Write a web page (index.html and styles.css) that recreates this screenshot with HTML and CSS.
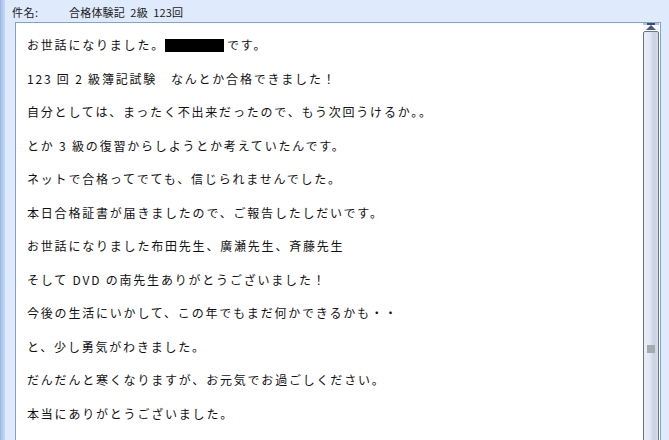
FILE: index.html
```
<!DOCTYPE html>
<html lang="ja">
<head>
    <meta charset="UTF-8">
    <title>件名: 合格体験記 2級 123回</title>
    <link rel="stylesheet" href="styles.css">
</head>
<body>
    <div class="window">
        <div class="edge"></div>
        <div class="pane">
            <div class="subject">
                <span class="label">件名:</span>
                <span class="title">合格体験記&nbsp;&nbsp;2級&nbsp;&nbsp;123回</span>
            </div>
            <div class="mailbox">
                <div class="body-text">
                    <p>お世話になりました。<span class="redact"></span>です。</p>
                    <p>123 回 2 級簿記試験　なんとか合格できました！</p>
                    <p>自分としては、まったく不出来だったので、もう次回うけるか。。</p>
                    <p>とか 3 級の復習からしようとか考えていたんです。</p>
                    <p>ネットで合格ってでても、信じられませんでした。</p>
                    <p>本日合格証書が届きましたので、ご報告したしだいです。</p>
                    <p>お世話になりました布田先生、廣瀬先生、斉藤先生</p>
                    <p>そして DVD の南先生ありがとうございました！</p>
                    <p>今後の生活にいかして、この年でもまだ何かできるかも・・</p>
                    <p>と、少し勇気がわきました。</p>
                    <p>だんだんと寒くなりますが、お元気でお過ごしください。</p>
                    <p>本当にありがとうございました。</p>
                </div>
                <div class="scrollbar">
                    <div class="splitter"><span></span></div>
                    <div class="arrow-up"><span></span></div>
                    <div class="thumb"><span class="grip"></span></div>
                </div>
            </div>
        </div>
    </div>
</body>
</html>
```

FILE: styles.css
```
html, body {
    margin: 0;
    height: 100%;
    overflow: hidden;
}
body {
    background: #dfeafc;
    font-family: "Noto Sans CJK JP", "Liberation Sans", sans-serif;
    color: #000;
}
.window {
    display: flex;
    height: 440px;
}
.edge {
    width: 5px;
    flex-shrink: 0;
    background: linear-gradient(to right, #8fadde 0, #a9c3ec 1px, #b6cdf1 3px, #c8daf6 5px);
}
.pane {
    flex: 1;
    display: flex;
    flex-direction: column;
    padding: 0 8px 0 10px;
}
.subject {
    height: 22px;
    display: flex;
    align-items: center;
    margin-left: -3px;
    font-size: 11px;
    color: #1a1a1a;
    padding-top: 1px;
    box-sizing: border-box;
}
.label {
    width: 57px;
    flex-shrink: 0;
    letter-spacing: 0.5px;
}
.title {
    letter-spacing: 0.2px;
}
.mailbox {
    flex: 1;
    display: flex;
    background: #fff;
    border: 1px solid #7fa2d6;
    border-bottom: none;
    overflow: hidden;
}
.body-text {
    flex: 1;
    padding: 13px 0 0 11px;
}
.body-text p {
    margin: 0 0 16.5px;
    font-size: 12px;
    line-height: 17px;
    letter-spacing: 1.8px;
    white-space: nowrap;
    color: #111;
}
.redact {
    display: inline-block;
    width: 59px;
    height: 13px;
    background: #000;
    vertical-align: -2px;
    margin: 0 3px 0 0;
}
.scrollbar {
    width: 16px;
    flex-shrink: 0;
    margin-right: 1px;
    display: flex;
    flex-direction: column;
    align-items: stretch;
}
.splitter {
    height: 6px;
    background: #a9c4ec;
    display: flex;
    align-items: center;
    justify-content: center;
}
.splitter span {
    width: 8px;
    height: 2px;
    background: #3d4a6b;
}
.arrow-up {
    height: 18px;
    display: flex;
    align-items: center;
    justify-content: center;
    background: linear-gradient(to bottom, #ffffff, #eef2f8);
}
.arrow-up span {
    width: 0;
    height: 0;
    border-left: 5px solid transparent;
    border-right: 5px solid transparent;
    border-bottom: 5px solid #4b5879;
}
.thumb {
    flex: 1;
    margin-top: 1px;
    min-height: 640px;
    border: 1px solid #68738f;
    border-radius: 2px;
    background: linear-gradient(to right, #e9edf4 0, #e4e9f1 40%, #c9d3e2 70%, #d6dde9 100%);
    position: relative;
}
.grip {
    position: absolute;
    left: 3px;
    top: 313px;
    width: 8px;
    height: 8px;
    background: #a6a9ae;
}
```
